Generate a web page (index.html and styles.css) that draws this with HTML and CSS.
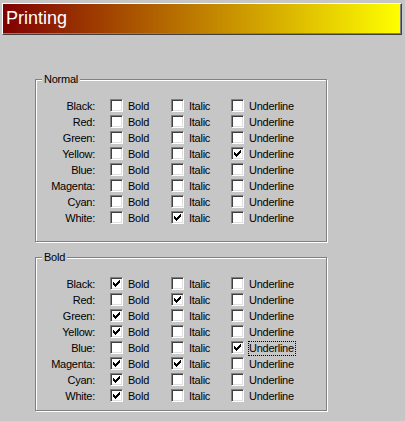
FILE: index.html
```html
<!DOCTYPE html>
<html>
<head>
<meta charset="utf-8">
<link rel="stylesheet" href="styles.css">
</head>
<body>
<div class="banner">Printing</div>

<div class="group group-normal">
  <span class="legend">Normal</span>
  <div class="grid">
    <span class="lbl">Black:</span>
    <span class="opt"><span class="cb"></span><span class="txt">Bold</span></span>
    <span class="opt"><span class="cb"></span><span class="txt">Italic</span></span>
    <span class="opt"><span class="cb"></span><span class="txt">Underline</span></span>

    <span class="lbl">Red:</span>
    <span class="opt"><span class="cb"></span><span class="txt">Bold</span></span>
    <span class="opt"><span class="cb"></span><span class="txt">Italic</span></span>
    <span class="opt"><span class="cb"></span><span class="txt">Underline</span></span>

    <span class="lbl">Green:</span>
    <span class="opt"><span class="cb"></span><span class="txt">Bold</span></span>
    <span class="opt"><span class="cb"></span><span class="txt">Italic</span></span>
    <span class="opt"><span class="cb"></span><span class="txt">Underline</span></span>

    <span class="lbl">Yellow:</span>
    <span class="opt"><span class="cb"></span><span class="txt">Bold</span></span>
    <span class="opt"><span class="cb"></span><span class="txt">Italic</span></span>
    <span class="opt"><span class="cb"><svg class="chk" viewBox="0 0 7 7" width="7" height="7"><path d="M0 2h1v3H0zM1 3h1v3H1zM2 4h1v3H2zM3 3h1v3H3zM4 2h1v3H4zM5 1h1v3H5zM6 0h1v3H6z"/></svg></span><span class="txt">Underline</span></span>

    <span class="lbl">Blue:</span>
    <span class="opt"><span class="cb"></span><span class="txt">Bold</span></span>
    <span class="opt"><span class="cb"></span><span class="txt">Italic</span></span>
    <span class="opt"><span class="cb"></span><span class="txt">Underline</span></span>

    <span class="lbl">Magenta:</span>
    <span class="opt"><span class="cb"></span><span class="txt">Bold</span></span>
    <span class="opt"><span class="cb"></span><span class="txt">Italic</span></span>
    <span class="opt"><span class="cb"></span><span class="txt">Underline</span></span>

    <span class="lbl">Cyan:</span>
    <span class="opt"><span class="cb"></span><span class="txt">Bold</span></span>
    <span class="opt"><span class="cb"></span><span class="txt">Italic</span></span>
    <span class="opt"><span class="cb"></span><span class="txt">Underline</span></span>

    <span class="lbl">White:</span>
    <span class="opt"><span class="cb"></span><span class="txt">Bold</span></span>
    <span class="opt"><span class="cb"><svg class="chk" viewBox="0 0 7 7" width="7" height="7"><path d="M0 2h1v3H0zM1 3h1v3H1zM2 4h1v3H2zM3 3h1v3H3zM4 2h1v3H4zM5 1h1v3H5zM6 0h1v3H6z"/></svg></span><span class="txt">Italic</span></span>
    <span class="opt"><span class="cb"></span><span class="txt">Underline</span></span>
  </div>
</div>

<div class="group group-bold">
  <span class="legend">Bold</span>
  <div class="grid">
    <span class="lbl">Black:</span>
    <span class="opt"><span class="cb"><svg class="chk" viewBox="0 0 7 7" width="7" height="7"><path d="M0 2h1v3H0zM1 3h1v3H1zM2 4h1v3H2zM3 3h1v3H3zM4 2h1v3H4zM5 1h1v3H5zM6 0h1v3H6z"/></svg></span><span class="txt">Bold</span></span>
    <span class="opt"><span class="cb"></span><span class="txt">Italic</span></span>
    <span class="opt"><span class="cb"></span><span class="txt">Underline</span></span>

    <span class="lbl">Red:</span>
    <span class="opt"><span class="cb"></span><span class="txt">Bold</span></span>
    <span class="opt"><span class="cb"><svg class="chk" viewBox="0 0 7 7" width="7" height="7"><path d="M0 2h1v3H0zM1 3h1v3H1zM2 4h1v3H2zM3 3h1v3H3zM4 2h1v3H4zM5 1h1v3H5zM6 0h1v3H6z"/></svg></span><span class="txt">Italic</span></span>
    <span class="opt"><span class="cb"></span><span class="txt">Underline</span></span>

    <span class="lbl">Green:</span>
    <span class="opt"><span class="cb"><svg class="chk" viewBox="0 0 7 7" width="7" height="7"><path d="M0 2h1v3H0zM1 3h1v3H1zM2 4h1v3H2zM3 3h1v3H3zM4 2h1v3H4zM5 1h1v3H5zM6 0h1v3H6z"/></svg></span><span class="txt">Bold</span></span>
    <span class="opt"><span class="cb"></span><span class="txt">Italic</span></span>
    <span class="opt"><span class="cb"></span><span class="txt">Underline</span></span>

    <span class="lbl">Yellow:</span>
    <span class="opt"><span class="cb"><svg class="chk" viewBox="0 0 7 7" width="7" height="7"><path d="M0 2h1v3H0zM1 3h1v3H1zM2 4h1v3H2zM3 3h1v3H3zM4 2h1v3H4zM5 1h1v3H5zM6 0h1v3H6z"/></svg></span><span class="txt">Bold</span></span>
    <span class="opt"><span class="cb"></span><span class="txt">Italic</span></span>
    <span class="opt"><span class="cb"></span><span class="txt">Underline</span></span>

    <span class="lbl">Blue:</span>
    <span class="opt"><span class="cb"></span><span class="txt">Bold</span></span>
    <span class="opt"><span class="cb"></span><span class="txt">Italic</span></span>
    <span class="opt"><span class="cb"><svg class="chk" viewBox="0 0 7 7" width="7" height="7"><path d="M0 2h1v3H0zM1 3h1v3H1zM2 4h1v3H2zM3 3h1v3H3zM4 2h1v3H4zM5 1h1v3H5zM6 0h1v3H6z"/></svg></span><span class="txt focus">Underline</span></span>

    <span class="lbl">Magenta:</span>
    <span class="opt"><span class="cb"><svg class="chk" viewBox="0 0 7 7" width="7" height="7"><path d="M0 2h1v3H0zM1 3h1v3H1zM2 4h1v3H2zM3 3h1v3H3zM4 2h1v3H4zM5 1h1v3H5zM6 0h1v3H6z"/></svg></span><span class="txt">Bold</span></span>
    <span class="opt"><span class="cb"><svg class="chk" viewBox="0 0 7 7" width="7" height="7"><path d="M0 2h1v3H0zM1 3h1v3H1zM2 4h1v3H2zM3 3h1v3H3zM4 2h1v3H4zM5 1h1v3H5zM6 0h1v3H6z"/></svg></span><span class="txt">Italic</span></span>
    <span class="opt"><span class="cb"></span><span class="txt">Underline</span></span>

    <span class="lbl">Cyan:</span>
    <span class="opt"><span class="cb"><svg class="chk" viewBox="0 0 7 7" width="7" height="7"><path d="M0 2h1v3H0zM1 3h1v3H1zM2 4h1v3H2zM3 3h1v3H3zM4 2h1v3H4zM5 1h1v3H5zM6 0h1v3H6z"/></svg></span><span class="txt">Bold</span></span>
    <span class="opt"><span class="cb"></span><span class="txt">Italic</span></span>
    <span class="opt"><span class="cb"></span><span class="txt">Underline</span></span>

    <span class="lbl">White:</span>
    <span class="opt"><span class="cb"><svg class="chk" viewBox="0 0 7 7" width="7" height="7"><path d="M0 2h1v3H0zM1 3h1v3H1zM2 4h1v3H2zM3 3h1v3H3zM4 2h1v3H4zM5 1h1v3H5zM6 0h1v3H6z"/></svg></span><span class="txt">Bold</span></span>
    <span class="opt"><span class="cb"></span><span class="txt">Italic</span></span>
    <span class="opt"><span class="cb"></span><span class="txt">Underline</span></span>
  </div>
</div>
</body>
</html>
```

FILE: styles.css
```css
html, body {
  margin: 0;
  padding: 0;
  background: #c6c6c6;
}

body {
  font-family: "Liberation Sans", Arial, sans-serif;
  font-size: 11px;
  color: #000;
  overflow: hidden;
  height: 421px;
}

.banner {
  box-sizing: border-box;
  width: 400px;
  height: 32px;
  margin: 3px 0 0 2px;
  padding-left: 3px;
  border-top: 1px solid #fff;
  border-left: 1px solid #fff;
  border-right: 1px solid #404040;
  border-bottom: 1px solid #404040;
  box-shadow: inset -1px -1px 0 #808080;
  background: linear-gradient(to right, #800000, #ffff00);
  color: #fff;
  font-size: 18px;
  line-height: 29px;
}

.group {
  position: relative;
  box-sizing: border-box;
  width: 292px;
  margin-left: 35px;
  border: 1px solid #808080;
  box-shadow: inset 1px 1px 0 #fff, 1px 1px 0 #fff;
}

.group-normal {
  margin-top: 44px;
}

.group-bold {
  margin-top: 15px;
}

.legend {
  position: absolute;
  top: -7px;
  left: 6px;
  padding: 0 2px;
  line-height: 13px;
  background: #c6c6c6;
  letter-spacing: -0.25px;
}

.grid {
  display: grid;
  grid-template-columns: 70px 61px 60px auto;
  grid-auto-rows: 16px;
  padding: 18px 0 15px 4px;
}

.group-bold .grid {
  padding-bottom: 6px;
}

.lbl {
  text-align: right;
  padding-right: 15px;
  line-height: 16px;
  letter-spacing: -0.25px;
  white-space: nowrap;
}

.opt {
  display: flex;
  align-items: flex-start;
}

.cb {
  box-sizing: border-box;
  width: 13px;
  height: 13px;
  margin-top: 1px;
  flex: none;
  background: #fff;
  border-top: 1px solid #808080;
  border-left: 1px solid #808080;
  border-right: 1px solid #fff;
  border-bottom: 1px solid #fff;
  box-shadow: inset 1px 1px 0 #404040, inset -1px -1px 0 #dfdfdf;
}

.chk {
  display: block;
  margin: 2px;
  fill: #000;
  shape-rendering: crispEdges;
}

.txt {
  margin-left: 5px;
  line-height: 16px;
  letter-spacing: -0.25px;
  white-space: nowrap;
}

.focus {
  line-height: 13px;
  margin-top: 2px;
  padding-right: 1px;
  outline: 1px dotted #000;
}
```
